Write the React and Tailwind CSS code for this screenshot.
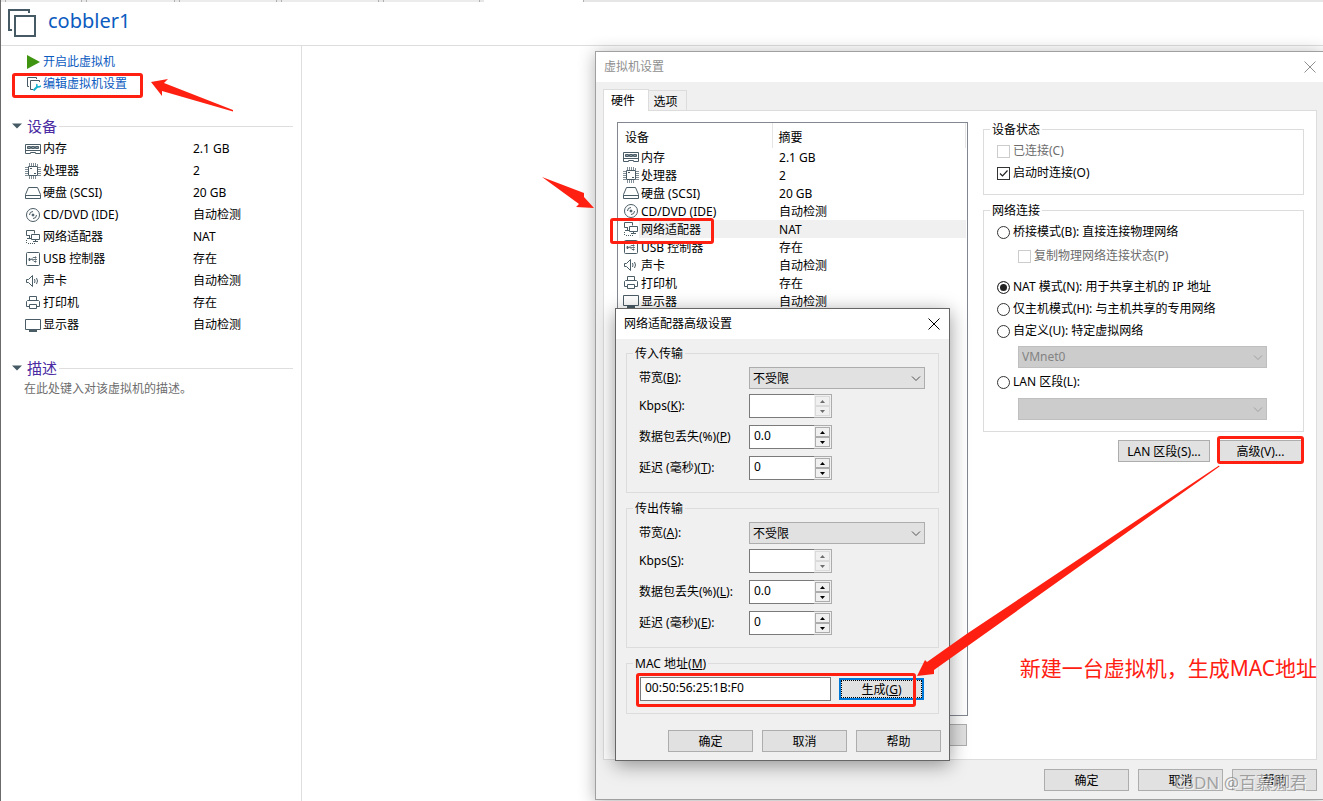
import clsx from "clsx";

const devices = [
  { icon: "memory", name: "内存", summary: "2.1 GB" },
  { icon: "cpu", name: "处理器", summary: "2" },
  { icon: "disk", name: "硬盘 (SCSI)", summary: "20 GB" },
  { icon: "cd", name: "CD/DVD (IDE)", summary: "自动检测" },
  { icon: "network", name: "网络适配器", summary: "NAT" },
  { icon: "usb", name: "USB 控制器", summary: "存在" },
  { icon: "sound", name: "声卡", summary: "自动检测" },
  { icon: "printer", name: "打印机", summary: "存在" },
  { icon: "display", name: "显示器", summary: "自动检测" },
];

const icons = {
  memory: (
    <>
      <path d="M.5 3.5h15v9h-5v-1h-5v1h-5z" />
      <path d="M2.5 5.5h3v2h-3zM6.5 5.5h3v2h-3zM10.5 5.5h3v2h-3z" fill="#8a979e" />
      <path d="M1 9.5h14" />
    </>
  ),
  cpu: (
    <>
      <path d="M3.5 3.5h9v9h-9z" />
      <path
        d="M4.5 0v3M6.5 0v3M8.5 0v3M10.5 0v3M12.5 1v2M4.5 13v3M6.5 13v3M8.5 13v3M10.5 13v3M0 4.5h3M0 6.5h3M0 8.5h3M0 10.5h3M0 12.5h3M13 4.5h3M13 6.5h3M13 8.5h3M13 10.5h3M13 12.5h3"
        strokeOpacity=".7"
      />
      <path d="M5 5.5h2M9 10.5h2" />
    </>
  ),
  disk: (
    <>
      <path d="M3.5 2.5h9l3 7v4H.5v-4z" />
      <path d="M1 10.5h14" />
    </>
  ),
  cd: (
    <>
      <circle cx="8" cy="8" r="6.5" />
      <circle cx="8" cy="8" r="1" fill="#4a5c66" />
      <path d="M4.5 8A3.5 3.5 0 0 1 8 4.5M11.5 8A3.5 3.5 0 0 1 8 11.5" />
    </>
  ),
  network: (
    <>
      <path d="M5 6.5H1.5v-5h8v3M4.5 7v2.500M2 9.5h4" />
      <path d="M6.5 5.5h8v5h-8zM10.500 10.500v2M8 12.500h5" />
      <path d="M1.5 11v4M3 14.500h7" strokeDasharray="1 1" />
    </>
  ),
  usb: (
    <>
      <rect x="1.5" y="1.5" width="13" height="13" rx="1" />
      <path d="M4 8.500h8M6.500 8L8 6.500h2M7.500 9L9 10.500h1" strokeOpacity=".8" />
      <path d="M4 7.500h1v2H4zM10 6h1v1h-1zM10 10h1v1h-1z" />
    </>
  ),
  sound: (
    <>
      <path d="M1.5 6.5h2l4-4v11l-4-4h-2z" />
      <path d="M9.5 6q1 2 0 4M11.500 5q2 3 0 6" />
    </>
  ),
  printer: (
    <>
      <path d="M4.5 6V1.500h7V6M4 11.500H1.500v-5l1-1h11l1 1v5H12" />
      <path d="M4.5 9.500h7v4h-7z" />
    </>
  ),
  display: (
    <>
      <path d="M.5 2.500h15v10H.5z" />
      <path d="M4 14h8" strokeWidth="2" />
    </>
  ),
};

function DeviceIcon({ name }) {
  return (
    <svg viewBox="0 0 16 16" className="block size-4" fill="none" stroke="#4a5c66" aria-hidden="true">
      {icons[name]}
    </svg>
  );
}

function Highlight({ className }) {
  return <span className={clsx("pointer-events-none absolute z-10 rounded-[3px] border-3 border-[#ff2012]", className)} />;
}

function CloseButton({ className }) {
  return (
    <button type="button" aria-label="关闭" className={className}>
      <svg viewBox="0 0 12 12" className="block size-3" stroke="currentColor" fill="none">
        <path d="M.5.5l11 11M11.500.5l-11 11" />
      </svg>
    </button>
  );
}

function Button({ className, children }) {
  return (
    <button
      type="button"
      className={clsx("h-[22px] border border-[#adadad] bg-[#e1e1e1] pt-0.5 text-center leading-[18px]", className || "w-[85px]")}
    >
      {children}
    </button>
  );
}

function Group({ title, className, children }) {
  return (
    <fieldset className="min-w-0 border border-[#dcdcdc]">
      <legend className="ml-1.5 h-[18px] px-0.5 leading-5">{title}</legend>
      <div className={className}>{children}</div>
    </fieldset>
  );
}

function Select({ id, label, options, disabled, className }) {
  return (
    <div className={clsx("relative h-[22px]", className)}>
      <select
        id={id}
        aria-label={label}
        disabled={disabled}
        className="block h-full w-full appearance-none border border-[#adadad] bg-[#e1e1e1] pt-0.5 pl-[3px] leading-[18px] text-black disabled:border-[#bfbfbf] disabled:bg-[#ccc] disabled:pt-0 disabled:text-[#838383] disabled:opacity-100"
      >
        {options.map((o) => (
          <option key={o}>{o}</option>
        ))}
      </select>
      <svg
        viewBox="0 0 10 6"
        className={clsx("pointer-events-none absolute top-[9px] right-1 h-1.5 w-2.5", disabled ? "text-[#a0a0a0]" : "text-[#505050]")}
        fill="none"
        stroke="currentColor"
      >
        <path d="M1 .5l4 4 4-4" />
      </svg>
    </div>
  );
}

function Spinner({ id, value, disabled }) {
  const arrow = disabled ? "#6d6d6d" : "#000";
  const button = clsx("flex flex-1 items-center justify-center border bg-[#f0f0f0]", disabled ? "border-[#dadada]" : "border-[#acacac]");
  return (
    <div className="flex h-6 w-[83px]">
      <input
        id={id}
        type="text"
        defaultValue={value}
        readOnly={disabled}
        className="h-full w-[65px] border border-r-0 border-[#7a7a7a] bg-white pb-1 pl-1 outline-none"
      />
      <div className="flex w-[18px] flex-col border border-l-0 border-[#acacac] p-px">
        <button type="button" aria-label="增加" className={button}>
          <svg viewBox="0 0 5 3" className="h-[3px] w-[5px]" fill={arrow}>
            <path d="M2.5 0L5 3H0z" />
          </svg>
        </button>
        <button type="button" aria-label="减少" className={button}>
          <svg viewBox="0 0 5 3" className="h-[3px] w-[5px]" fill={arrow}>
            <path d="M0 0h5L2.500 3z" />
          </svg>
        </button>
      </div>
    </div>
  );
}

function Checkbox({ label, className, ...rest }) {
  return (
    <label className={clsx("relative flex h-[22px] items-center gap-[3px]", rest.disabled && "text-[#6d6d6d]", className)}>
      <input
        type="checkbox"
        className="peer size-[13px] appearance-none border border-[#333] bg-white disabled:border-[#ccc]"
        {...rest}
      />
      <svg viewBox="0 0 13 13" className="absolute left-0 hidden size-[13px] peer-checked:block" fill="none" stroke="#222">
        <path d="M3 6.500L5.500 9l5-5.500" strokeWidth="1.200" />
      </svg>
      {label}
    </label>
  );
}

function Radio({ label, className, ...rest }) {
  return (
    <label className={clsx("flex h-[22px] items-center gap-[3px]", className)}>
      <input
        type="radio"
        name="connection"
        className="size-[13px] appearance-none rounded-full border border-[#333] bg-white checked:bg-[#222] checked:shadow-[inset_0_0_0_2px_white]"
        {...rest}
      />
      {label}
    </label>
  );
}

function SectionTitle({ children }) {
  return (
    <h2 className="flex h-[22px] items-center pr-2 pl-[11px]">
      <svg viewBox="0 0 10 6" className="mr-[5px] h-1.5 w-2.5" fill="#455a64">
        <path d="M0 .5h10L5 5.500z" />
      </svg>
      <span className="text-[15px] leading-[22px] text-[#4b2ca3]">{children}</span>
      <span className="ml-0.5 h-px flex-1 bg-[#dedede]" />
    </h2>
  );
}

function Sidebar() {
  return (
    <aside className="w-[301px] shrink-0 border-r border-[#dedede] pt-[5px]">
      <a href="#start" className="flex h-[22px] items-center pl-[25px] text-[#0b5bc0]">
        <svg viewBox="0 0 14 14" className="mr-[3px] size-3.5" fill="#3f9410">
          <path d="M1 0l13 7-13 7z" />
        </svg>
        开启此虚拟机
      </a>
      <a href="#edit" className="relative flex h-[22px] items-center pl-[25px] text-[#0b5bc0]">
        <svg viewBox="0 0 16 16" className="mr-px size-4" fill="none" stroke="#455a64">
          <path d="M3 10.500H1.500v-9h9V3M7 13.500H4.500v-9h9V6" />
          <path d="M7.500 14.500l4-4" stroke="#15b2cf" strokeWidth="2" />
          <path d="M11 8q-1 3 2 3l2-1" stroke="#15b2cf" strokeWidth="1.500" />
        </svg>
        编辑虚拟机设置
        <Highlight className="top-0 left-[11px] h-[25px] w-[131px]" />
      </a>

      <div className="mt-5">
        <SectionTitle>设备</SectionTitle>
        <table className="w-full table-fixed">
          <tbody>
            {devices.map((d) => (
              <tr key={d.icon} className="h-[22px]">
                <td className="w-48 p-0 pt-0.5">
                  <div className="flex items-center gap-0.5 pl-6">
                    <DeviceIcon name={d.icon} />
                    {d.name}
                  </div>
                </td>
                <td className="p-0 pt-0.5">{d.summary}</td>
              </tr>
            ))}
          </tbody>
        </table>
      </div>

      <div className="mt-[22px]">
        <SectionTitle>描述</SectionTitle>
        <p className="pl-[23px] leading-5 text-[#6d6d6d]">在此处键入对该虚拟机的描述。</p>
      </div>
    </aside>
  );
}

function DeviceList() {
  return (
    <div className="h-[594px] border border-[#828790] bg-white pr-px">
      <table className="w-full table-fixed">
        <colgroup>
          <col className="w-[21px]" />
          <col className="w-[133px]" />
          <col />
        </colgroup>
        <thead>
          <tr className="h-[25px] text-left">
            <th colSpan={2} className="p-0 pt-1 pl-[7px] font-normal">
              设备
            </th>
            <th className="border-x border-[#e5e5e5] p-0 pt-1 pl-1.5 font-normal">摘要</th>
          </tr>
        </thead>
        <tbody>
          {devices.map((d) => {
            const selected = d.icon === "network";
            return (
              <tr key={d.icon} className="h-[18px] leading-4">
                <td className="p-0 pl-[5px]">
                  <DeviceIcon name={d.icon} />
                </td>
                <td className={clsx("relative p-0 pt-0.5 pl-0.5", selected && "bg-[#f0f0f0]")}>
                  {d.name}
                  {selected && <Highlight className="-top-0.5 -left-[29px] h-[26px] w-[104px]" />}
                </td>
                <td className={clsx("p-0 pt-0.5 pl-[7px]", selected && "bg-[#f0f0f0]")}>{d.summary}</td>
              </tr>
            );
          })}
        </tbody>
      </table>
    </div>
  );
}

function SettingsDialog() {
  return (
    <section className="absolute top-[51px] right-0 left-[594px] border-y border-l border-[#a0a0a0] bg-[#f0f0f0] shadow-[0_2px_16px_rgba(0,0,0,0.3)]">
      <header className="flex h-[30px] items-center justify-between bg-white pr-[7px] pl-2 text-[#8f8f8f]">
        <h2>虚拟机设置</h2>
        <CloseButton className="text-[#8f8f8f]" />
      </header>

      <div className="pt-[7px] pr-1.5 pl-[7px]">
        <div className="flex items-end">
          <button type="button" className="relative z-10 -mb-px h-[22px] w-[46px] border border-b-0 border-[#dcdcdc] bg-white pr-1.5">
            硬件
          </button>
          <button type="button" className="h-5 w-[38px] border border-b-0 border-l-0 border-[#dcdcdc] pt-0.5 pr-1">
            选项
          </button>
        </div>

        <div className="flex gap-[15px] border border-[#dcdcdc] bg-white pt-[11px] pr-3 pb-[13px] pl-[13px]">
          <div className="w-[351px] shrink-0">
            <DeviceList />
            <div className="mt-2 flex justify-end gap-2 pr-px">
              <Button>添加(A)...</Button>
              <Button>移除(R)</Button>
            </div>
          </div>

          <div className="-mt-0.5 flex-1">
            <Group title="设备状态" className="h-14 pt-0.5 pl-[13px]">
              <Checkbox label="已连接(C)" disabled />
              <Checkbox label="启动时连接(O)" defaultChecked />
            </Group>
            <div className="mt-1.5">
              <Group title="网络连接" className="pt-0.5 pb-[11px] pl-[13px]">
                <Radio label="桥接模式(B): 直接连接物理网络" />
                <Checkbox label="复制物理网络连接状态(P)" disabled className="mt-0.5 ml-[21px]" />
                <Radio label="NAT 模式(N): 用于共享主机的 IP 地址" defaultChecked className="mt-[9px]" />
                <Radio label="仅主机模式(H): 与主机共享的专用网络" />
                <Radio label="自定义(U): 特定虚拟网络" />
                <Select label="特定虚拟网络" options={["VMnet0"]} disabled className="mt-1 mr-9 ml-[21px]" />
                <Radio label="LAN 区段(L):" className="mt-[3px]" />
                <Select label="LAN 区段" options={[""]} disabled className="mt-[5px] mr-9 ml-[21px]" />
              </Group>
            </div>
            <div className="mt-2 flex justify-end gap-2 pr-px">
              <Button className="w-[92px]">LAN 区段(S)...</Button>
              <div className="relative">
                <Button>高级(V)...</Button>
                <Highlight className="-inset-x-px -top-1 h-[28px]" />
              </div>
            </div>
          </div>
        </div>
      </div>

      <footer className="flex justify-end gap-[9px] pt-[9px] pr-1.5 pb-2">
        <Button>确定</Button>
        <Button>取消</Button>
        <Button>帮助</Button>
      </footer>
    </section>
  );
}

const transfers = [
  { title: "传入传输", id: "in", bandwidth: "B", kbps: "K", loss: "P", lossEnd: "", delay: "T" },
  { title: "传出传输", id: "out", bandwidth: "A", kbps: "S", loss: "L", lossEnd: ":", delay: "E" },
];

function TransferGroup({ group }) {
  const { id } = group;
  const row = "flex items-center";
  const label = "w-[110px] shrink-0 whitespace-nowrap";
  return (
    <Group title={group.title} className="pt-[5px] pr-[13px] pb-3 pl-3">
      <div className={row}>
        <label htmlFor={id + "-bandwidth"} className={label}>
          带宽(<u>{group.bandwidth}</u>):
        </label>
        <Select id={id + "-bandwidth"} options={["不受限"]} className="flex-1" />
      </div>
      <div className="mt-[5px] flex flex-col gap-[7px]">
        <div className={row}>
          <label htmlFor={id + "-kbps"} className={label}>
            Kbps(<u>{group.kbps}</u>):
          </label>
          <Spinner id={id + "-kbps"} value="" disabled />
        </div>
        <div className={row}>
          <label htmlFor={id + "-loss"} className={label}>
            数据包丢失(%)(<u>{group.loss}</u>){group.lossEnd}
          </label>
          <Spinner id={id + "-loss"} value="0.0" />
        </div>
        <div className={row}>
          <label htmlFor={id + "-delay"} className={label}>
            延迟 (毫秒)(<u>{group.delay}</u>):
          </label>
          <Spinner id={id + "-delay"} value="0" />
        </div>
      </div>
    </Group>
  );
}

function AdvancedDialog() {
  return (
    <section className="absolute top-[308px] left-[614px] w-[335px] border border-[#666] bg-[#f0f0f0] shadow-[0_4px_18px_rgba(0,0,0,0.4)]">
      <header className="flex h-[30px] items-center justify-between bg-white pr-[9px] pb-px pl-2">
        <h2>网络适配器高级设置</h2>
        <CloseButton />
      </header>
      <div className="flex flex-col gap-1.5 px-2.5 pt-[5px]">
        {transfers.map((t) => (
          <TransferGroup key={t.id} group={t} />
        ))}
        <Group
          title={
            <label htmlFor="mac">
              MAC 地址(<u>M</u>)
            </label>
          }
          className="pt-[5px] pr-3.5 pb-3 pl-[13px]"
        >
          <div className="relative flex items-center gap-2">
            <input
              id="mac"
              type="text"
              defaultValue="00:50:56:25:1B:F0"
              className="h-6 min-w-0 flex-1 border border-[#7a7a7a] bg-white pb-1 pl-1 outline-none"
            />
            <button type="button" className="h-[22px] w-[85px] border-2 border-[#0078d7] bg-[#e1e1e1]">
              <span className="block h-[18px] border border-dotted border-black leading-[18px]">
                生成(<u>G</u>)
              </span>
            </button>
            <Highlight className="-top-1 right-2 -left-1 h-[34px]" />
          </div>
        </Group>
      </div>
      <footer className="mt-4 flex justify-end gap-[9px] pr-2 pb-2">
        <Button>确定</Button>
        <Button>取消</Button>
        <Button>帮助</Button>
      </footer>
    </section>
  );
}

const tabWidths = ["w-[77px]", "w-[89px]", "w-[98px]", "w-[98px]", "w-[97px]"];

export default function App() {
  return (
    <div className="relative flex min-h-screen flex-col overflow-hidden border-l border-[#6b6b6b] bg-white font-['Noto_Sans','Noto_Sans_CJK_SC',sans-serif] text-xs text-black">
      <div className="flex h-0.5 bg-[#e6e6e6] pl-1">
        {tabWidths.map((w, i) => (
          <span key={i} className={clsx("mr-1 shrink-0 border-x border-[#b0b0b0] bg-[#ececec]", w)} />
        ))}
        <span className="w-[100px] border-r border-[#b0b0b0] bg-white" />
      </div>
      <header className="flex h-11 items-start gap-3 border-b border-[#dedede] pt-[7px] pl-[7px]">
        <svg viewBox="0 0 28 28" className="size-7" fill="none" stroke="#455a64" strokeWidth="2">
          <path d="M4 21H1V1h20v3M7 7h20v20H7z" />
        </svg>
        <h1 className="text-xl leading-6 text-[#0b5bc0]">cobbler1</h1>
      </header>
      <main className="flex flex-1">
        <Sidebar />
      </main>

      <SettingsDialog />
      <AdvancedDialog />

      {/* annotations */}
      <svg viewBox="0 0 1323 801" className="pointer-events-none absolute top-0 -left-px h-[801px] w-[1323px]" fill="#ff2012">
        <path d="M151 82l17-3-4 4 69 27v1.500L162 91v5z" />
        <path d="M542 177l42 16v4l10 11-18-1 3-3z" />
        <path d="M1219 465.500l.5 1L934 670v4l-17 2 8-16 2 2L968 633z" />
      </svg>
      <p className="absolute top-[654px] right-1.5 text-[21px] leading-7 text-[#ff2012]">新建一台虚拟机，生成MAC地址</p>
      <p className="pointer-events-none absolute top-[771px] right-4 text-[17px] leading-6 text-[#808080]/70 [text-shadow:1px_1px_0_rgba(255,255,255,0.7)]">
        CSDN @百慕卿君
      </p>
    </div>
  );
}
